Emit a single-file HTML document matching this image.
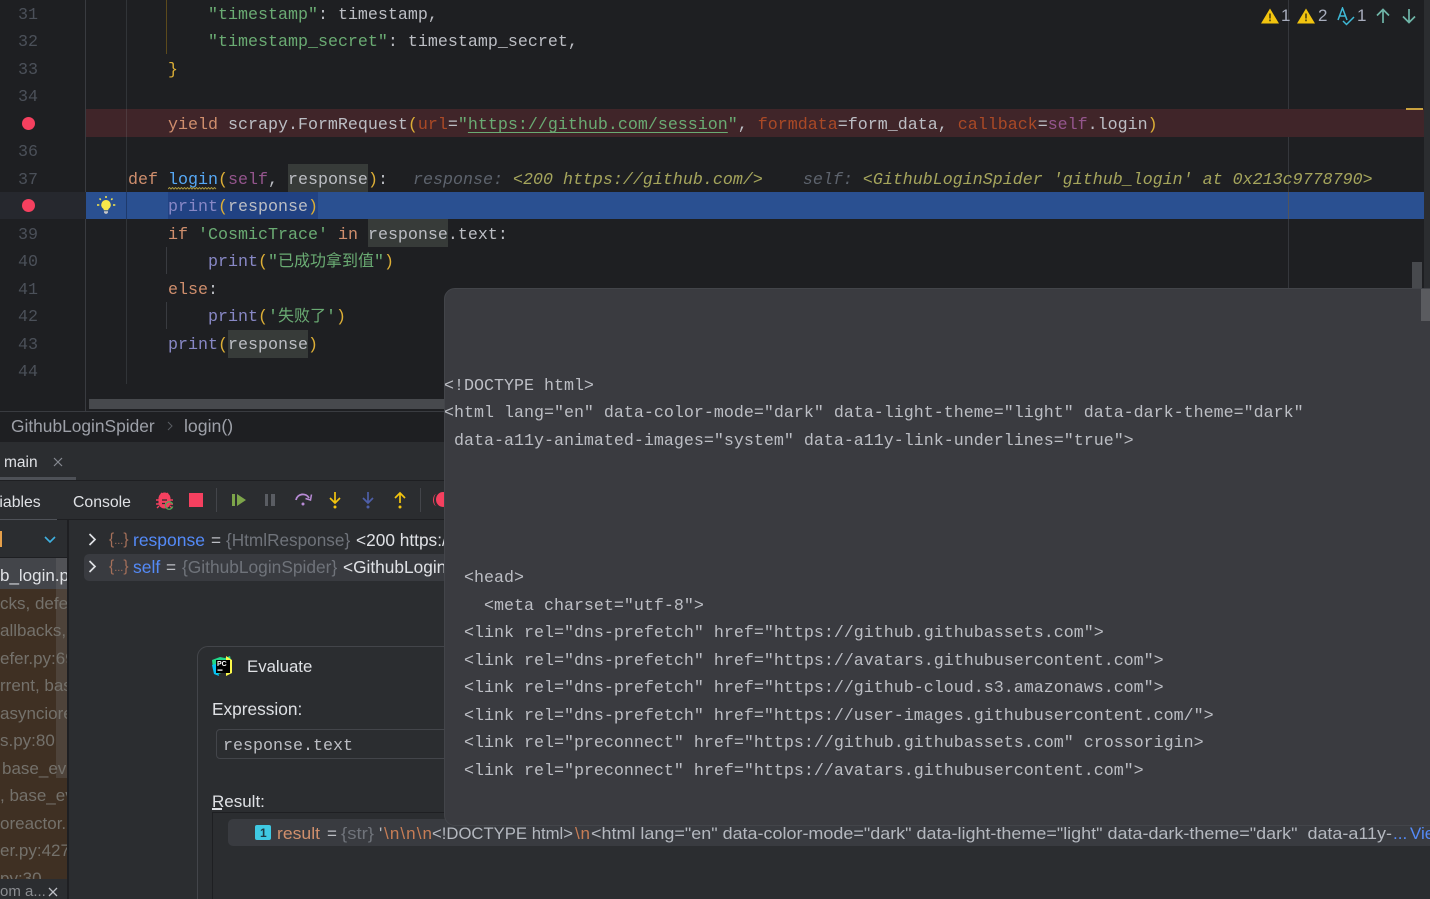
<!DOCTYPE html>
<html><head><meta charset="utf-8">
<style>
html,body{margin:0;padding:0;background:#1e1f22;}
#r{position:relative;width:1430px;height:899px;overflow:hidden;background:#1e1f22;}
#r div,#r svg{position:absolute;}
.m{font-family:"Liberation Mono","Noto Sans CJK SC",monospace;font-size:16.67px;white-space:pre;height:27px;line-height:27px;color:#bcbec4;margin-top:1px;}
.n{font-family:"Liberation Mono",monospace;font-size:16.67px;height:27px;line-height:27px;color:#4b5059;left:18px;white-space:pre;margin-top:.5px;}
.u{font-family:"Liberation Sans","Noto Sans CJK SC",sans-serif;font-size:16px;white-space:pre;color:#bcbec4;height:24px;line-height:24px;margin-top:1px;}
.k{color:#cf8e6d}.s{color:#6aab73}.y{color:#dcae36}.f{color:#94558d}.a{color:#aa4926}.p{color:#8888c6}.b{color:#56a8f5}.g{color:#54a857}
.c{font-size:16px}
.i{font-style:italic}.ik{color:#5d636d}.iv{color:#a5a55c}
.ln{text-decoration:underline;text-underline-offset:3px}
.d{width:13px;height:13px;border-radius:50%;background:#f5405f}
.pp{color:#bcbec4;left:444px}
.gr{color:#6f737a}.bl{color:#548af7}.lt{color:#dfe1e5}.or{color:#c77d55}
.v{font-size:17.200px}
.fl{font-size:17px;color:#74716b;left:0;margin-top:0}
svg text{font-family:"Liberation Sans",sans-serif;font-size:17px}
</style></head><body><div id="r">

<!-- editor -->
<div style="left:85px;top:0;width:1px;height:412px;background:#393b40"></div>
<div style="left:126px;top:0;width:1px;height:384px;background:#313438"></div>
<div style="left:1288px;top:0;width:1px;height:288px;background:#35373c"></div>
<div style="left:1424px;top:0;width:6px;height:412px;background:#2b2d30"></div>
<div style="left:86px;top:109px;width:1338px;height:28px;background:#402529"></div>
<div style="left:0;top:192px;width:86px;height:27px;background:#26282e"></div>
<div style="left:86px;top:192px;width:1338px;height:27px;background:#2a5091"></div>
<div style="left:168px;top:192px;width:150px;height:27px;background:#214283"></div>
<div style="left:126px;top:109px;width:1px;height:28px;background:#4e3a3e"></div>
<div style="left:126px;top:192px;width:1px;height:27px;background:#1e3a6c"></div>
<div style="left:1288px;top:192px;width:1px;height:27px;background:#52555c"></div>
<div style="left:166px;top:0;width:1px;height:54px;background:#5c4a1c"></div>
<div style="left:166px;top:247px;width:1px;height:27px;background:#393b40"></div>
<div style="left:166px;top:302px;width:1px;height:27px;background:#393b40"></div>
<div style="left:1406px;top:108px;width:17px;height:2px;background:#c9a13f"></div>
<div style="left:1412px;top:262px;width:10px;height:30px;background:#47494d"></div>

<div class="n" style="top:1px">31</div>
<div class="n" style="top:28px">32</div>
<div class="n" style="top:56px">33</div>
<div class="n" style="top:83px">34</div>
<div class="d" style="left:22px;top:117px"></div>
<div class="n" style="top:138px">36</div>
<div class="n" style="top:166px">37</div>
<div class="d" style="left:22px;top:199px"></div>
<div class="n" style="top:221px">39</div>
<div class="n" style="top:248px">40</div>
<div class="n" style="top:276px">41</div>
<div class="n" style="top:303px">42</div>
<div class="n" style="top:331px">43</div>
<div class="n" style="top:358px">44</div>

<div class="m" style="left:208px;top:1px"><span class="s">"timestamp"</span>: timestamp,</div>
<div class="m" style="left:208px;top:28px"><span class="s">"timestamp_secret"</span>: timestamp_secret,</div>
<div class="m" style="left:168px;top:56px;color:#dcae36">}</div>
<div class="m" style="left:168px;top:111px"><span class="k">yield</span> scrapy.FormRequest<span class="y">(</span><span class="a">url</span>=<span class="s">"<span class="ln">https://github.com/session</span>"</span>, <span class="a">formdata</span>=form_data, <span class="a">callback</span>=<span class="f">self</span>.login<span class="y">)</span></div>
<div style="left:288px;top:164px;width:80px;height:28px;background:#373b39"></div>
<div class="m" style="left:128px;top:166px"><span class="k">def</span> <span class="b">login</span><span class="y">(</span><span class="f">self</span>, response<span class="y">)</span>:</div>
<div class="m" style="left:413px;top:166px"><span class="i ik">response: </span><span class="i iv">&lt;200 https://github.com/&gt;</span><span class="i ik">    self: </span><span class="i iv">&lt;GithubLoginSpider 'github_login' at 0x213c9778790&gt;</span></div>
<svg style="left:168px;top:187px" width="50" height="4"><path d="M0 2l1.5-1.500 1.500 1.500 1.500-1.500 1.500 1.500 1.500-1.500 1.500 1.500 1.500-1.500 1.500 1.500 1.500-1.500 1.500 1.500 1.500-1.500 1.500 1.500 1.500-1.500 1.500 1.500 1.500-1.500 1.500 1.500 1.500-1.500 1.500 1.500 1.500-1.500 1.500 1.500 1.500-1.500 1.500 1.500 1.500-1.500 1.500 1.500 1.500-1.500 1.500 1.500 1.500-1.500 1.500 1.500 1.500-1.500 1.500 1.500 1.500-1.500 1.500 1.500" fill="none" stroke="#a5933f" stroke-width="1"/></svg>
<div class="m" style="left:168px;top:193px"><span class="p">print</span><span class="y">(</span>response<span class="y">)</span></div>
<svg style="left:96px;top:196px" width="20" height="20" viewBox="0 0 20 20"><path d="M10 4a4.800 4.800 0 0 0-3 8.500c.6.500.8 1.200.8 1.800h4.400c0-.6.200-1.300.8-1.800A4.800 4.800 0 0 0 10 4z" fill="#f7e84a"/><path d="M8 15.300h4v1.200l-1 1.200H9l-1-1.200z" fill="#c9c9c9"/><path d="M10 0v2M3.500 2.500l1.300 1.300M16.500 2.500l-1.300 1.300M1 9h2.300M17 9h2.300" stroke="#f7e84a" stroke-width="1.500"/></svg>
<div style="left:368px;top:219px;width:80px;height:28px;background:#373b39"></div>
<div class="m" style="left:168px;top:221px"><span class="k">if</span> <span class="s">'CosmicTrace'</span> <span class="k">in</span> response.text:</div>
<div class="m" style="left:208px;top:248px"><span class="p">print</span><span class="y">(</span><span class="s">"<span class="c">已成功拿到值</span>"</span><span class="y">)</span></div>
<div class="m" style="left:168px;top:276px"><span class="k">else</span>:</div>
<div class="m" style="left:208px;top:303px"><span class="p">print</span><span class="y">(</span><span class="s">'<span class="c">失败了</span>'</span><span class="y">)</span></div>
<div style="left:228px;top:330px;width:80px;height:28px;background:#373b39"></div>
<div class="m" style="left:168px;top:331px"><span class="p">print</span><span class="y">(</span>response<span class="y">)</span></div>
<div style="left:89px;top:399px;width:360px;height:10px;background:#47494d"></div>

<!-- inspection widget -->
<svg style="left:1261px;top:8px" width="18" height="16" viewBox="0 0 18 16"><path d="M9 .5L18 15.500H0z" fill="#f2c40f"/><path d="M8.200 5.500h1.600v5H8.200zM8.200 11.500h1.600v1.800H8.200z" fill="#4a3f10"/></svg>
<div class="u" style="left:1281px;top:3px;color:#a8adbd;font-size:17px">1</div>
<svg style="left:1297px;top:8px" width="18" height="16" viewBox="0 0 18 16"><path d="M9 .5L18 15.500H0z" fill="#f2c40f"/><path d="M8.200 5.500h1.600v5H8.200zM8.200 11.500h1.600v1.800H8.200z" fill="#4a3f10"/></svg>
<div class="u" style="left:1318px;top:3px;color:#a8adbd;font-size:17px">2</div>
<svg style="left:1337px;top:7px" width="20" height="19" viewBox="0 0 20 19" fill="none" stroke="#3fb9d6" stroke-width="1.500"><path d="M1 13L5.500 1 10 13M2.700 9h5.600"/><path d="M6 14l3.500 3.500L17 10"/></svg>
<div class="u" style="left:1357px;top:3px;color:#a8adbd;font-size:17px">1</div>
<svg style="left:1376px;top:8px" width="14" height="16" viewBox="0 0 14 16" fill="none" stroke="#6fb5a8" stroke-width="1.700"><path d="M7 15V1.500M1 7.500l6-6 6 6"/></svg>
<svg style="left:1402px;top:8px" width="14" height="16" viewBox="0 0 14 16" fill="none" stroke="#6fb5a8" stroke-width="1.700"><path d="M7 1v13.500M1 8.500l6 6 6-6"/></svg>

<!-- breadcrumb -->
<div style="left:0;top:411px;width:1430px;height:1px;background:#393b40"></div>
<div style="left:0;top:412px;width:1430px;height:30px;background:#1e1f22"></div>
<div class="u" style="left:11px;top:413px;color:#9da0a8;font-size:17.350px">GithubLoginSpider</div>
<svg style="left:167px;top:421px" width="6" height="10" viewBox="0 0 6 10" fill="none" stroke="#5a5d63" stroke-width="1"><path d="M1 1l4 4-4 4"/></svg>
<div class="u" style="left:184px;top:413px;color:#9da0a8;font-size:17.700px">login()</div>

<!-- debug panel -->
<div style="left:0;top:442px;width:1430px;height:457px;background:#2b2d30"></div>
<div class="u" style="left:4px;top:450px;color:#dfe1e5;font-size:15.500px">main</div>
<svg style="left:53px;top:457px" width="10" height="10" viewBox="0 0 10 10" stroke="#868a91" stroke-width="1.200"><path d="M1 1l8 8M9 1l-8 8"/></svg>
<div style="left:0;top:477px;width:76px;height:4px;background:#4e5157"></div>
<div style="left:0;top:480px;width:444px;height:1px;background:#1e1f22"></div>
<div class="u" style="left:-24px;top:490px;color:#dfe1e5;font-size:15.800px">Variables</div>
<div class="u" style="left:73px;top:490px;color:#dfe1e5;font-size:15.800px">Console</div>
<div style="left:0;top:519px;width:444px;height:1px;background:#1e1f22"></div>
<div style="left:0;top:519px;width:57px;height:2px;background:#4e5157"></div>
<!-- toolbar icons -->
<svg style="left:156px;top:492px" width="19" height="18" viewBox="0 0 19 18"><path d="M2.500 6.500a6 6 0 0 1 12 0v4a6 6 0 0 1-12 0z" fill="#f5405f"/><path d="M0 8h17M0 12h17M1 16l2-2M16 16l-2-2M5 1l2 2M12 1l-2 2" stroke="#f5405f" stroke-width="1.400"/><path d="M6 8h5M6 11.500h3" stroke="#2b2d30" stroke-width="1.300"/><path d="M16.500 12a3.700 3.700 0 1 0 .2 2.500" fill="none" stroke="#54a857" stroke-width="1.300"/></svg>
<div style="left:189px;top:493px;width:14px;height:14px;background:#f5405f"></div>
<div style="left:216px;top:488px;width:1px;height:24px;background:#43454a"></div>
<svg style="left:232px;top:494px" width="14" height="12" viewBox="0 0 14 12" fill="#7da54a"><path d="M0 0h3v12H0zM5 0l9 6-9 6z"/></svg>
<div style="left:265px;top:494px;width:3px;height:12px;background:#5a5d63"></div>
<div style="left:271px;top:494px;width:4px;height:12px;background:#5a5d63"></div>
<svg style="left:294px;top:492px" width="19" height="16" viewBox="0 0 19 16" fill="none" stroke="#b88bd6" stroke-width="1.800"><path d="M2 8a7 7 0 0 1 13-2"/><path d="M17.500 2.500L16.500 8l-5-1.500" stroke-width="1.500"/><circle cx="9" cy="12" r="1.500" fill="#b88bd6" stroke="none"/></svg>
<svg style="left:328px;top:491px" width="14" height="18" viewBox="0 0 14 18" fill="none" stroke="#f2c40f" stroke-width="1.700"><path d="M7 1v10M2 7l5 5 5-5"/><circle cx="7" cy="16" r="1.500" fill="#f2c40f" stroke="none"/></svg>
<svg style="left:361px;top:491px" width="14" height="18" viewBox="0 0 14 18" fill="none" stroke="#4e5fa8" stroke-width="1.700"><path d="M7 1v10M2 7l5 5 5-5"/><circle cx="7" cy="16" r="1.500" fill="#4e5fa8" stroke="none"/></svg>
<svg style="left:393px;top:491px" width="14" height="18" viewBox="0 0 14 18" fill="none" stroke="#f2c40f" stroke-width="1.700"><path d="M7 12V2M2 7l5-5 5 5"/><circle cx="7" cy="16" r="1.500" fill="#f2c40f" stroke="none"/></svg>
<div style="left:420px;top:488px;width:1px;height:24px;background:#43454a"></div>
<div style="left:436px;top:492px;width:14px;height:15px;border-radius:50%;background:#f5405f"></div>
<div style="left:433px;top:494px;width:6px;height:12px;border-radius:50%;border-left:1.500px solid #f5405f"></div>

<!-- frames list -->
<div style="left:0;top:520px;width:67px;height:379px;background:#2b2d30;overflow:hidden">
<div style="left:0;top:37px;width:67px;height:1px;background:#1e1f22"></div>
<div style="left:0;top:11px;width:2px;height:16px;background:#e6a04a"></div>
<svg style="left:44px;top:16px" width="12" height="8" viewBox="0 0 12 8" fill="none" stroke="#3fb0e0" stroke-width="1.600"><path d="M1 1l5 5 5-5"/></svg>
<div style="left:0;top:38px;width:67px;height:31px;background:#43454a"></div>
<div style="left:0;top:69px;width:67px;height:290px;background:#3f3023"></div>
<div style="left:56px;top:38px;width:11px;height:220px;background:rgba(120,120,120,.28)"></div>
<div class="u fl" style="top:44px;color:#dfe1e5">b_login.py</div>
<div class="u fl" style="top:72px">cks, defer</div>
<div class="u fl" style="top:99px">allbacks,</div>
<div class="u fl" style="top:127px">efer.py:69</div>
<div class="u fl" style="top:154px">rrent, bas</div>
<div class="u fl" style="top:182px">asynciore</div>
<div class="u fl" style="top:209px">s.py:80</div>
<div class="u fl" style="top:237px;left:2px">base_eve</div>
<div class="u fl" style="top:264px">, base_ev</div>
<div class="u fl" style="top:292px">oreactor.</div>
<div class="u fl" style="top:319px">er.py:427</div>
<div class="u fl" style="top:347px">py:30</div>
<div style="left:0;top:359px;width:67px;height:20px;background:#2b2d30"></div>
<div class="u" style="left:0;top:359px;color:#8a8c90;font-size:15px">om a...</div>
<svg style="left:48px;top:367px" width="10" height="10" viewBox="0 0 10 10" stroke="#bcbec4" stroke-width="1.300"><path d="M1 1l8 8M9 1l-8 8"/></svg>
</div>
<div style="left:67px;top:520px;width:2px;height:379px;background:#1e1f22"></div>

<!-- variables -->
<svg style="left:88px;top:533px" width="9" height="13" viewBox="0 0 9 13" fill="none" stroke="#dfe1e5" stroke-width="1.700"><path d="M1.500 1l5.500 5.500-5.500 5.500"/></svg>
<div class="u" style="left:109px;top:527px;font-size:15.500px;color:#a5705a">{<span style="font-size:11px">...</span>}</div>
<div class="u v bl" style="left:133px;top:527px;font-size:17.500px">response</div>
<div class="u v" style="left:211px;top:527px">=</div>
<div class="u v gr" style="left:226px;top:527px;font-size:17.200px">{HtmlResponse}</div>
<div class="u v lt" style="left:356px;top:527px;font-size:17.300px;width:88px;overflow:hidden">&lt;200 https://github.com/&gt;</div>
<div style="left:84px;top:554px;width:360px;height:27px;border-radius:5px 0 0 5px;background:#393b40"></div>
<svg style="left:88px;top:560px" width="9" height="13" viewBox="0 0 9 13" fill="none" stroke="#dfe1e5" stroke-width="1.700"><path d="M1.500 1l5.500 5.500-5.500 5.500"/></svg>
<div class="u" style="left:109px;top:554px;font-size:15.500px;color:#a5705a">{<span style="font-size:11px">...</span>}</div>
<div class="u v bl" style="left:133px;top:554px;font-size:17.500px">self</div>
<div class="u v" style="left:166px;top:554px">=</div>
<div class="u v gr" style="left:182px;top:554px;font-size:17.350px">{GithubLoginSpider}</div>
<div class="u v lt" style="left:343px;top:554px;font-size:17.300px;width:101px;overflow:hidden">&lt;GithubLoginSpider 'github_login'&gt;</div>

<!-- evaluate -->
<div style="left:197px;top:646px;width:1240px;height:270px;box-sizing:border-box;border:1px solid #43454a;border-radius:11px;background:#2b2d30"></div>
<svg style="left:212px;top:656px" width="20" height="20" viewBox="0 0 20 20"><path d="M0 4l8-3 5 1 5-2 2 9-2 9-6-2-8 3-3-6z" fill="#21d789"/><path d="M14 0l6 4v13l-6 3z" fill="#fcf84a"/><path d="M0 9l2 9 5 2-3-12z" fill="#07c3f2"/><rect x="4" y="4" width="14" height="13" fill="#000"/><text x="5" y="10" font-weight="700" fill="#fff" style="font-size:7px">PC</text><rect x="5.500" y="13.500" width="5" height="1.200" fill="#fff"/></svg>
<div class="u" style="left:247px;top:654px;color:#dfe1e5;font-size:16.800px">Evaluate</div>
<div class="u" style="left:212px;top:696px;color:#dfe1e5;font-size:17.300px">Expression:</div>
<div style="left:216px;top:729px;width:300px;height:30px;box-sizing:border-box;border:1px solid #43454a;border-radius:4px;background:#2b2d30"></div>
<div class="m" style="left:223px;top:732px">response.text</div>
<div class="u" style="left:212px;top:789px;color:#dfe1e5;font-size:17px">Result:</div>
<div style="left:212px;top:808px;width:10px;height:2px;background:#dfe1e5"></div>
<div style="left:212px;top:812px;width:1240px;height:1px;background:#1e1f22"></div>
<div style="left:212px;top:812px;width:1px;height:87px;background:#1e1f22"></div>
<div style="left:228px;top:819px;width:1210px;height:27px;border-radius:5px;background:#393b40"></div>
<div style="left:255px;top:825px;width:16px;height:15px;border-radius:2px;background:#3fc9e3"></div>
<div class="u" style="left:260px;top:821px;font-size:12px;color:#1e3a44;height:22px;line-height:22px;font-weight:700">1</div>

<!-- popup -->
<div style="left:444px;top:288px;width:1000px;height:538px;box-sizing:border-box;border:1px solid #43454a;border-radius:11px;background:#3a3b40"></div>
<div style="left:1421px;top:289px;width:9px;height:32px;background:#5a5b5f"></div>
<div class="m pp" style="top:372px">&lt;!DOCTYPE html&gt;</div>
<div class="m pp" style="top:399px">&lt;html lang="en" data-color-mode="dark" data-light-theme="light" data-dark-theme="dark"</div>
<div class="m pp" style="top:427px"> data-a11y-animated-images="system" data-a11y-link-underlines="true"&gt;</div>
<div class="m pp" style="top:564px">  &lt;head&gt;</div>
<div class="m pp" style="top:592px">    &lt;meta charset="utf-8"&gt;</div>
<div class="m pp" style="top:619px">  &lt;link rel="dns-prefetch" href="https://github.githubassets.com"&gt;</div>
<div class="m pp" style="top:647px">  &lt;link rel="dns-prefetch" href="https://avatars.githubusercontent.com"&gt;</div>
<div class="m pp" style="top:674px">  &lt;link rel="dns-prefetch" href="https://github-cloud.s3.amazonaws.com"&gt;</div>
<div class="m pp" style="top:702px">  &lt;link rel="dns-prefetch" href="https://user-images.githubusercontent.com/"&gt;</div>
<div class="m pp" style="top:729px">  &lt;link rel="preconnect" href="https://github.githubassets.com" crossorigin&gt;</div>
<div class="m pp" style="top:757px">  &lt;link rel="preconnect" href="https://avatars.githubusercontent.com"&gt;</div>

<!-- result row text (sits on top of the popup edge) -->
<svg style="left:0;top:0" width="1430" height="899" xml:space="preserve">
<text x="277" y="839" fill="#d08f6c" textLength="43" lengthAdjust="spacingAndGlyphs">result</text>
<text x="327" y="839" fill="#bcbec4">=</text>
<text x="341" y="839" fill="#6f737a" textLength="33" lengthAdjust="spacingAndGlyphs">{str}</text>
<text x="379" y="839" fill="#b4b8bf">'</text>
<text x="384" y="839" fill="#c77d55" textLength="48" lengthAdjust="spacing">\n\n\n</text>
<text x="432" y="839" fill="#b4b8bf" textLength="141" lengthAdjust="spacingAndGlyphs">&lt;!DOCTYPE html&gt;</text>
<text x="575" y="839" fill="#c77d55" textLength="15" lengthAdjust="spacing">\n</text>
<text x="591" y="839" fill="#b4b8bf" textLength="801" lengthAdjust="spacingAndGlyphs" style="white-space:pre">&lt;html lang="en" data-color-mode="dark" data-light-theme="light" data-dark-theme="dark"  data-a11y-</text>
<text x="1393" y="839" fill="#548af7">...</text>
<text x="1410" y="839" fill="#548af7">View</text>
</svg>

</div></body></html>
